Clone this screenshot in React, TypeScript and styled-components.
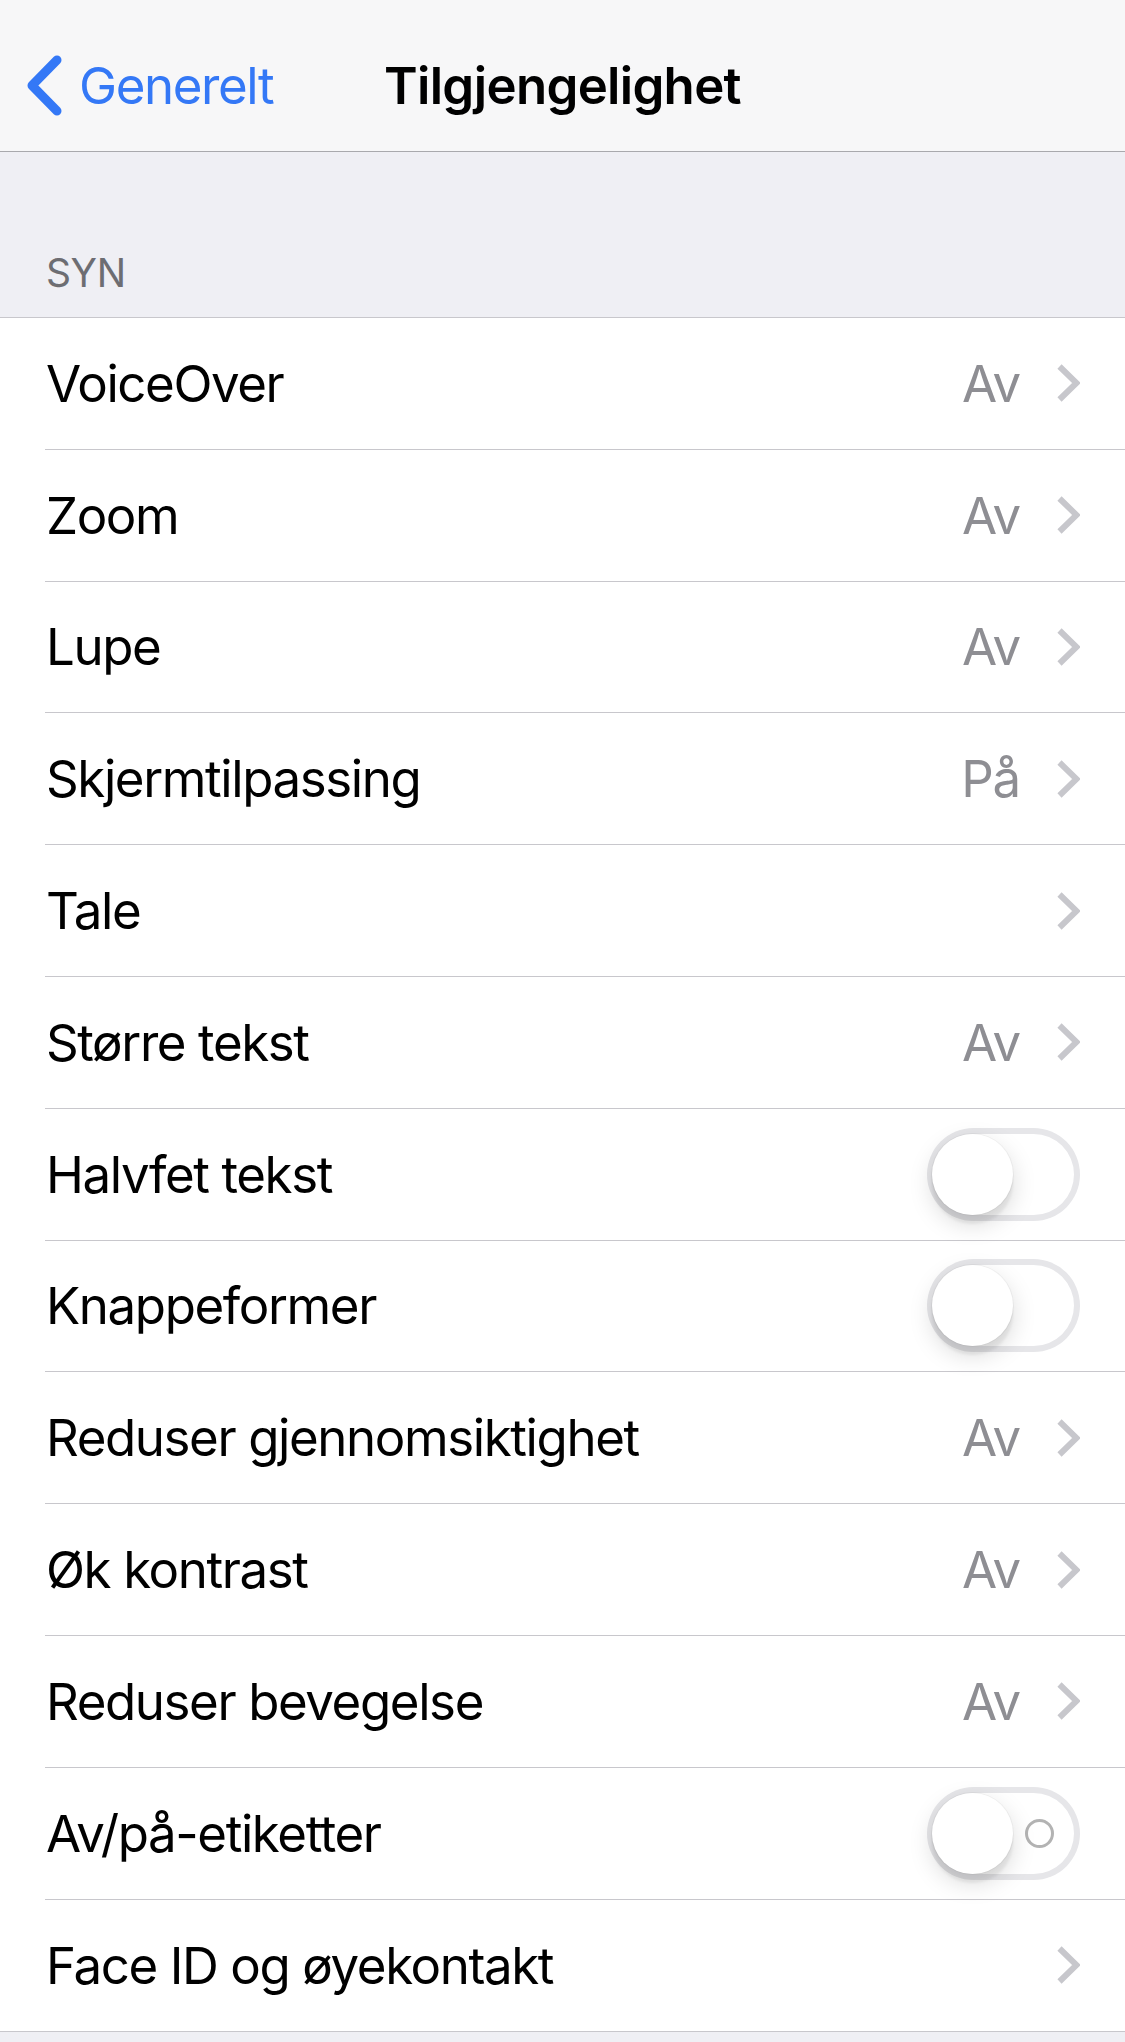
import React from "react";
import styled, { createGlobalStyle } from "styled-components";

const GlobalStyle = createGlobalStyle`
  html, body {
    margin: 0;
    padding: 0;
    background: #efeff4;
  }
  body {
    font-family: Inter, "Noto Sans", "Liberation Sans", sans-serif;
    -webkit-font-smoothing: antialiased;
  }
`;

const Page = styled.div`
  width: 1125px;
  min-height: 2042px;
  background: #efeff4;
`;

const NavBar = styled.header`
  height: 152px;
  box-sizing: border-box;
  padding-top: 20px;
  display: grid;
  grid-template-columns: 1fr auto 1fr;
  align-items: center;
  background: #f7f7f8;
  border-bottom: 1px solid #a9a9ad;
`;

const BackButton = styled.div`
  display: flex;
  align-items: center;
  gap: 17px;
  padding-left: 27px;
  color: #3478f6;
  font-size: 51px;
  line-height: 1;
  letter-spacing: -1.4px;
`;

const Title = styled.h1`
  margin: 0;
  font-size: 51px;
  line-height: 1;
  font-weight: 600;
  color: #000;
  letter-spacing: -0.7px;
`;

const SectionHeader = styled.div`
  height: 165px;
  box-sizing: border-box;
  display: flex;
  align-items: flex-end;
  padding: 0 47px 25px 46px;
  font-size: 39px;
  line-height: 1;
  color: #6d6d72;
  letter-spacing: -0.4px;
`;

const Group = styled.div`
  background: #fff;
  border-top: 1px solid #c8c7cc;
  border-bottom: 1px solid #c8c7cc;
`;

const Row = styled.div`
  padding-left: 45px;
`;

const RowInner = styled.div<{ $last?: boolean }>`
  height: 131.8px;
  box-sizing: border-box;
  display: flex;
  align-items: center;
  padding: 0 45px 0 1px;
  border-bottom: ${(p) => (p.$last ? "none" : "1px solid #c8c7cc")};
`;

const Label = styled.span`
  flex: 1;
  font-size: 51px;
  line-height: 1;
  color: #000;
  letter-spacing: -1.4px;
`;

const Value = styled.span`
  font-size: 51px;
  line-height: 1;
  color: #8e8e93;
  letter-spacing: -1.2px;
  margin-right: 37px;
`;

const Chevron = styled.svg`
  width: 23px;
  height: 38px;
  flex-shrink: 0;
`;

const Switch = styled.div`
  position: relative;
  width: 153px;
  height: 93px;
  box-sizing: border-box;
  border-radius: 47px;
  background: #fff;
  box-shadow: inset 0 0 0 6px #e6e6e9;
  flex-shrink: 0;
`;

const Knob = styled.div`
  position: absolute;
  left: 5px;
  top: 6px;
  width: 81px;
  height: 81px;
  border-radius: 50%;
  background: #fff;
  box-shadow: 0 9px 3px rgba(0, 0, 0, 0.06), 0 9px 24px rgba(0, 0, 0, 0.15),
    0 0 0 1px rgba(0, 0, 0, 0.04);
`;

const OffMark = styled.div`
  position: absolute;
  left: 98px;
  top: 32px;
  width: 29px;
  height: 29px;
  box-sizing: border-box;
  border-radius: 50%;
  border: 3px solid #b3b3b3;
`;

type Item = {
  label: string;
  value?: string;
  toggle?: boolean;
  mark?: boolean;
};

const items: Item[] = [
  { label: "VoiceOver", value: "Av" },
  { label: "Zoom", value: "Av" },
  { label: "Lupe", value: "Av" },
  { label: "Skjermtilpassing", value: "På" },
  { label: "Tale" },
  { label: "Større tekst", value: "Av" },
  { label: "Halvfet tekst", toggle: true },
  { label: "Knappeformer", toggle: true },
  { label: "Reduser gjennomsiktighet", value: "Av" },
  { label: "Øk kontrast", value: "Av" },
  { label: "Reduser bevegelse", value: "Av" },
  { label: "Av/på-etiketter", toggle: true, mark: true },
  { label: "Face ID og øyekontakt" },
];

const DisclosureIcon = () => (
  <Chevron viewBox="0 0 23 38">
    <polyline
      points="2.5,2.5 19.5,19 2.5,35.5"
      fill="none"
      stroke="#c7c7cc"
      strokeWidth="6"
      strokeLinejoin="miter"
    />
  </Chevron>
);

const BackIcon = () => (
  <svg width="35" height="61" viewBox="0 0 35 61">
    <polyline
      points="30,5 5,30.5 30,56"
      fill="none"
      stroke="#3478f6"
      strokeWidth="9"
      strokeLinecap="round"
      strokeLinejoin="round"
    />
  </svg>
);

const App = () => {
  return (
    <Page>
      <GlobalStyle />
      <NavBar>
        <BackButton>
          <BackIcon />
          <span>Generelt</span>
        </BackButton>
        <Title>Tilgjengelighet</Title>
        <div />
      </NavBar>
      <SectionHeader>SYN</SectionHeader>
      <Group>
        {items.map((item, i) => (
          <Row key={item.label}>
            <RowInner $last={i === items.length - 1}>
              <Label>{item.label}</Label>
              {item.toggle ? (
                <Switch>
                  {item.mark && <OffMark />}
                  <Knob />
                </Switch>
              ) : (
                <>
                  {item.value && <Value>{item.value}</Value>}
                  <DisclosureIcon />
                </>
              )}
            </RowInner>
          </Row>
        ))}
      </Group>
    </Page>
  );
};

export default App;
